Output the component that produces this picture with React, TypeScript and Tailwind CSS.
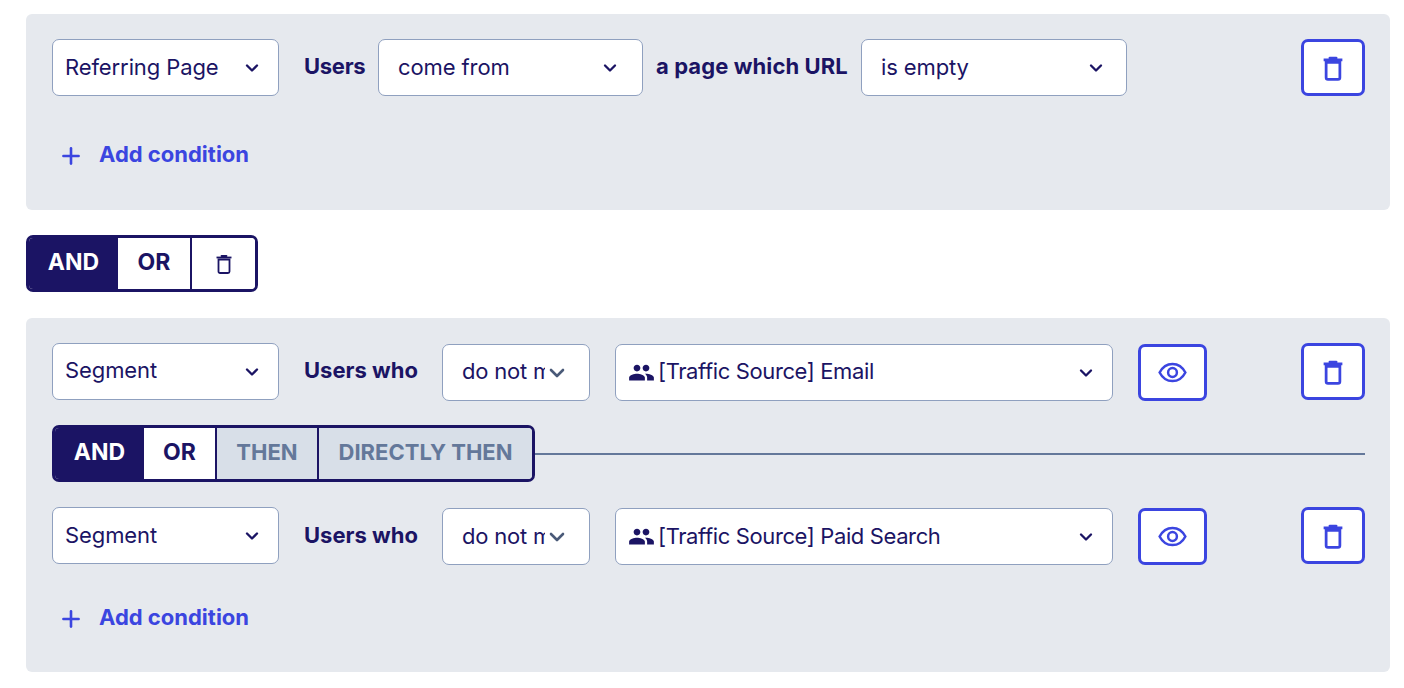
import React from "react";
import { Plus, ChevronDown } from "lucide-react";

const TrashIcon = ({ className, thin }: { className: string; thin?: boolean }) => (
  <svg viewBox="0 0 24 24" fill="none" stroke="currentColor" className={className} strokeWidth={thin ? 1.800 : 2.200}>
    <path d="M4.500 5.500h15" />
    <path d="M9.500 4h5" strokeLinecap="round" />
    <path d="M6.500 7.500h11v12a1.500 1.500 0 0 1-1.500 1.500H8a1.500 1.500 0 0 1-1.500-1.500z" />
  </svg>
);

const EyeIcon = () => (
  <svg viewBox="0 0 30 22" fill="none" stroke="currentColor" strokeWidth="2.600" className="w-[29px] h-[21px]">
    <path d="M1.500 11C4.500 5.200 9.200 2 15 2s10.500 3.200 13.500 9C25.500 16.800 20.800 20 15 20S4.500 16.800 1.500 11z" />
    <circle cx="15" cy="11" r="4.600" />
  </svg>
);

const PeopleIcon = () => (
  <svg viewBox="0 0 24 24" fill="currentColor" className="w-[27px] h-[27px] shrink-0 text-[#1b1464]">
    <path d="M16 11c1.660 0 2.990-1.340 2.990-3S17.660 5 16 5s-3 1.340-3 3 1.340 3 3 3zm-8 0c1.660 0 2.990-1.340 2.990-3S9.660 5 8 5 5 6.340 5 8s1.340 3 3 3zm0 2c-2.330 0-7 1.170-7 3.500V19h14v-2.500c0-2.330-4.670-3.500-7-3.500zm8 0c-.290 0-.620.020-.970.050 1.160.840 1.970 1.970 1.970 3.450V19h6v-2.500c0-2.330-4.670-3.500-7-3.500z" />
  </svg>
);

const Select = ({ label, className, pad = "pl-[12px] pr-4", textClass = "" }: { label: string; className: string; pad?: string; textClass?: string }) => (
  <div className={`h-[57px] bg-white border border-[#8fa0bf] rounded-[7px] flex items-center justify-between shrink-0 ${pad} ${className}`}>
    <span className={`truncate tracking-[-0.1px] ${textClass}`}>{label}</span>
    <ChevronDown className="w-5 h-5 shrink-0 text-[#1b1464]" strokeWidth={2.800} />
  </div>
);

const Label = ({ children, className }: { children: React.ReactNode; className: string }) => (
  <span className={`font-bold whitespace-nowrap pb-[2px] ${className}`}>{children}</span>
);

const DeleteButton = () => (
  <button className="ml-auto w-16 h-[57px] bg-white border-[3px] border-[#3b45e0] rounded-[7px] flex items-center justify-center text-[#3b45e0] shrink-0">
    <TrashIcon className="w-[30px] h-[30px]" />
  </button>
);

const AddCondition = () => (
  <div className="flex items-center h-8 pl-[6px] text-[#3b45e0] font-bold">
    <Plus className="w-[26px] h-[26px] mt-0.5" strokeWidth={2.400} />
    <span className="ml-[15px] pb-[2px]">Add condition</span>
  </div>
);

// first row's text sits a pixel higher than the second's
const SegmentRow = ({ name, up }: { name: string; up?: boolean }) => (
  <div className="flex items-start h-[58px]">
    <Select label="Segment" className="w-[227px]" textClass={up ? "pb-[2px]" : ""} />
    <Label className={`ml-[25px] w-[138px] ${up ? "leading-[55px]" : "leading-[57px]"}`}>Users who</Label>
    <div className="mt-px h-[57px] w-[148px] bg-white border border-[#8fa0bf] rounded-[7px] flex items-center pl-[19px] pr-[10px] shrink-0">
      <span className={`overflow-hidden whitespace-nowrap w-[83px] tracking-[-0.2px] ${up ? "pb-[2px]" : ""}`}>do not match</span>
      <ChevronDown className="w-6 h-6 shrink-0 text-[#4a5a78]" strokeWidth={2.600} />
    </div>
    <div className="mt-px ml-[25px] h-[57px] w-[498px] bg-white border border-[#8fa0bf] rounded-[7px] flex items-center pl-[12px] pr-4 shrink-0">
      <PeopleIcon />
      <span className={`ml-[3px] truncate tracking-[-0.38px] ${up ? "pb-[2px]" : ""}`}>{name}</span>
      <ChevronDown className="ml-auto w-5 h-5 shrink-0 text-[#1b1464]" strokeWidth={2.800} />
    </div>
    <button className="mt-px ml-[25px] w-[69px] h-[57px] bg-white border-[3px] border-[#3b45e0] rounded-[7px] flex items-center justify-center text-[#3b45e0] shrink-0">
      <EyeIcon />
    </button>
    <DeleteButton />
  </div>
);

export default function App() {
  return (
    <div className="w-[1404px] h-[688px] bg-white overflow-hidden pt-[14px] pl-[26px] pr-[14px] font-['Inter',sans-serif] text-[22px] text-[#1b1464]">
      <div className="h-[196px] bg-[#e6e9ee] rounded-md pl-[26px] pt-[25px] pr-[25px]">
        <div className="flex items-center h-[57px]">
          <Select label="Referring Page" className="w-[227px]" />
          <Label className="ml-[25px] w-[61px] tracking-[-0.3px]">Users</Label>
          <Select label="come from" className="ml-[13px] w-[265px]" pad="pl-[19px] pr-[22px]" />
          <Label className="ml-[13px] w-[192px] tracking-[0.1px]">a page which URL</Label>
          <Select label="is empty" className="ml-[13px] w-[266px]" pad="pl-[19px] pr-[20px]" />
          <DeleteButton />
        </div>
        <div className="mt-[43px]">
          <AddCondition />
        </div>
      </div>

      <div className="mt-[25px] w-[232px] h-[57px] flex border-[3px] border-[#1b1464] rounded-[7px] overflow-hidden font-bold">
        <div className="w-[89px] bg-[#1b1464] text-white text-[23px] pb-[2px] flex items-center justify-center">AND</div>
        <div className="w-[72px] bg-white text-[23px] pb-[2px] flex items-center justify-center">OR</div>
        <div className="flex-1 bg-white border-l-2 border-[#1b1464] flex items-center justify-center">
          <TrashIcon className="w-[24px] h-[24px]" thin />
        </div>
      </div>

      <div className="mt-[26px] h-[354px] bg-[#e6e9ee] rounded-md pl-[26px] pr-[25px] pt-[25px]">
        <SegmentRow name="[Traffic Source] Email" up />
        <div className="mt-[24px] flex items-center">
          <div className="w-[483px] h-[57px] flex border-[3px] border-[#1b1464] rounded-[7px] overflow-hidden font-bold shrink-0">
            <div className="w-[89px] bg-[#1b1464] text-white text-[23px] pb-[2px] flex items-center justify-center">AND</div>
            <div className="w-[71px] bg-white text-[23px] pb-[2px] flex items-center justify-center">OR</div>
            <div className="w-[102px] bg-[#d8dfe8] text-[#64789a] pb-[2px] border-l-2 border-[#1b1464] flex items-center justify-center">THEN</div>
            <div className="flex-1 bg-[#d8dfe8] text-[#64789a] pb-[2px] border-l-2 border-[#1b1464] flex items-center justify-center">DIRECTLY THEN</div>
          </div>
          <div className="flex-1 h-0.5 bg-[#64789a]" />
        </div>
        <div className="mt-[25px]">
          <SegmentRow name="[Traffic Source] Paid Search" />
        </div>
        <div className="mt-[37px]">
          <AddCondition />
        </div>
      </div>
    </div>
  );
}
